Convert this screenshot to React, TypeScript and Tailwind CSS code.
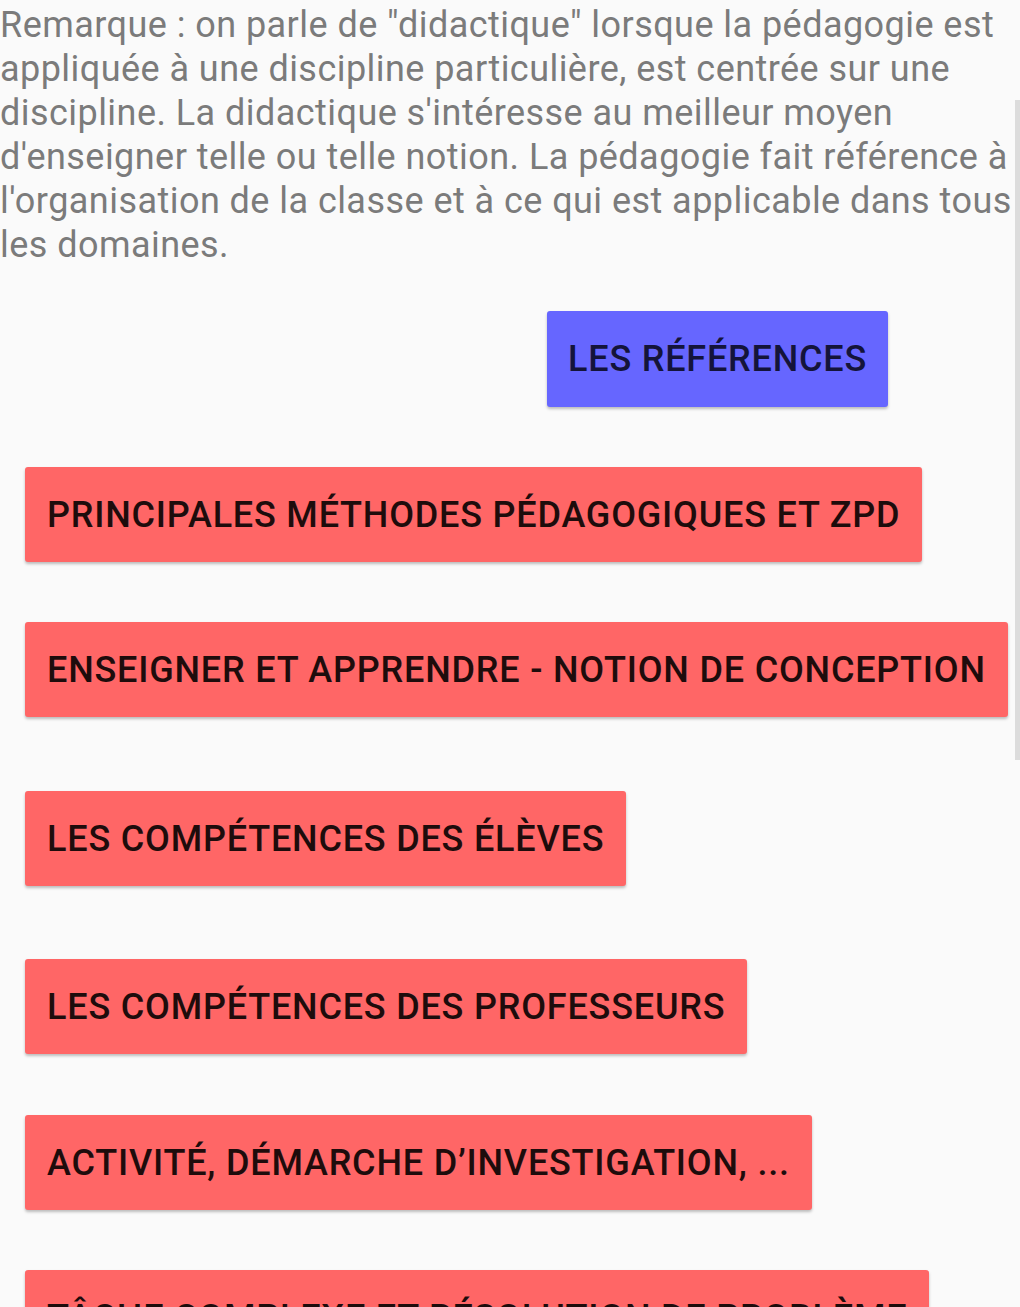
const NOTE_LINES = [
  'Remarque : on parle de "didactique" lorsque la pédagogie est',
  'appliquée à une discipline particulière, est centrée sur une',
  "discipline. La didactique s'intéresse au meilleur moyen",
  "d'enseigner telle ou telle notion. La pédagogie fait référence à",
  "l'organisation de la classe et à ce qui est applicable dans tous",
  'les domaines.',
]

const RED_BUTTONS = [
  { label: 'PRINCIPALES MÉTHODES PÉDAGOGIQUES ET ZPD', mt: 'mt-[60px]' },
  { label: 'ENSEIGNER ET APPRENDRE - NOTION DE CONCEPTION', mt: 'mt-[60px]' },
  { label: 'LES COMPÉTENCES DES ÉLÈVES', mt: 'mt-[74px]' },
  { label: 'LES COMPÉTENCES DES PROFESSEURS', mt: 'mt-[73px]' },
  { label: 'ACTIVITÉ, DÉMARCHE D’INVESTIGATION, ...', mt: 'mt-[61px]' },
  { label: 'TÂCHE COMPLEXE ET RÉSOLUTION DE PROBLÈME', mt: 'mt-[60px]' },
]

export default function App() {
  return (
    <div className="relative h-[1307px] w-[1020px] overflow-hidden bg-[#fafafa] font-['Roboto',sans-serif]">
      {/* scroll indicator */}
      <div className="absolute right-0 top-[100px] h-[660px] w-[5px] bg-[#dcdcdc]" />

      <p className="pt-[3px] text-[36px] leading-[44px] tracking-[0.45px] text-[#7b7b7b]">
        {NOTE_LINES.map((line) => (
          <span key={line} className="block whitespace-nowrap">
            {line}
          </span>
        ))}
      </p>

      <div className="flex flex-col items-start">
        <button className="ml-[547px] mt-[44px] flex h-[96px] items-center rounded-[3px] bg-[#6666ff] px-[21px] text-[36px] font-medium tracking-[0.8px] text-[#14143a] shadow-[0_2px_3px_rgba(0,0,0,0.25)]">
          LES RÉFÉRENCES
        </button>

        {RED_BUTTONS.map((b) => (
          <button
            key={b.label}
            className={`${b.mt} ml-[25px] flex h-[95px] shrink-0 items-center whitespace-nowrap rounded-[3px] bg-[#ff6666] px-[22px] text-[36px] font-medium tracking-[0.8px] text-[#1e0c0c] shadow-[0_2px_3px_rgba(0,0,0,0.25)]`}
          >
            {b.label}
          </button>
        ))}
      </div>
    </div>
  )
}
